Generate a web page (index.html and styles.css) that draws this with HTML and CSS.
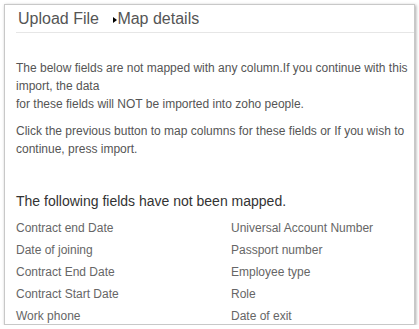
FILE: index.html
```html
<!DOCTYPE html>
<html lang="en">
<head>
  <meta charset="UTF-8">
  <title>Import - Map details</title>
  <link rel="stylesheet" href="styles.css">
</head>
<body>
  <div class="panel">
    <div class="steps">
      <span class="step">Upload File</span>
      <span class="step current">Map details</span>
    </div>

    <div class="content">
      <p>The below fields are not mapped with any column.If you continue with this import, the data<br>for these fields will NOT be imported into zoho people.</p>
      <p>Click the previous button to map columns for these fields or If you wish to continue, press import.</p>

      <h3>The following fields have not been mapped.</h3>
      <ul class="fields">
        <li>Contract end Date</li>
        <li>Universal Account Number</li>
        <li>Date of joining</li>
        <li>Passport number</li>
        <li>Contract End Date</li>
        <li>Employee type</li>
        <li>Contract Start Date</li>
        <li>Role</li>
        <li>Work phone</li>
        <li>Date of exit</li>
      </ul>
    </div>
  </div>
</body>
</html>
```

FILE: styles.css
```css
body {
  margin: 0;
  background: #fff;
  font-family: "Liberation Sans", Arial, Helvetica, sans-serif;
  color: #555;
}

.panel {
  margin: 4px 4px 0 4px;
  height: 319px;
  border: 1px solid #c8c8c8;
  box-shadow: 1px 1px 3px rgba(0,0,0,0.35);
  overflow: hidden;
  background: #fff;
}

.steps {
  margin-left: 11px;
  padding-top: 5px;
  height: 22px;
  border-bottom: 1px solid #e6e6e6;
  font-size: 16px;
  color: #555;
}

.step {
  display: inline-block;
  margin-left: 2px;
}

.current {
  margin-left: 10px;
}

.current::before {
  content: "";
  display: inline-block;
  width: 0;
  height: 0;
  border-top: 3px solid transparent;
  border-bottom: 3px solid transparent;
  border-left: 4px solid #000;
  vertical-align: middle;
  margin-right: 0;
}

.content {
  padding: 26px 0 0 11px;
}

p {
  margin: 0 0 9px 0;
  font-size: 12px;
  line-height: 18px;
}

h3 {
  margin: 35px 0 8px 0;
  font-size: 14px;
  font-weight: normal;
  color: #333;
}

.fields {
  list-style: none;
  margin: 0;
  padding: 0;
  display: grid;
  grid-template-columns: 215px 1fr;
  font-size: 12px;
  color: #666;
}

.fields li {
  line-height: 22px;
}
```
